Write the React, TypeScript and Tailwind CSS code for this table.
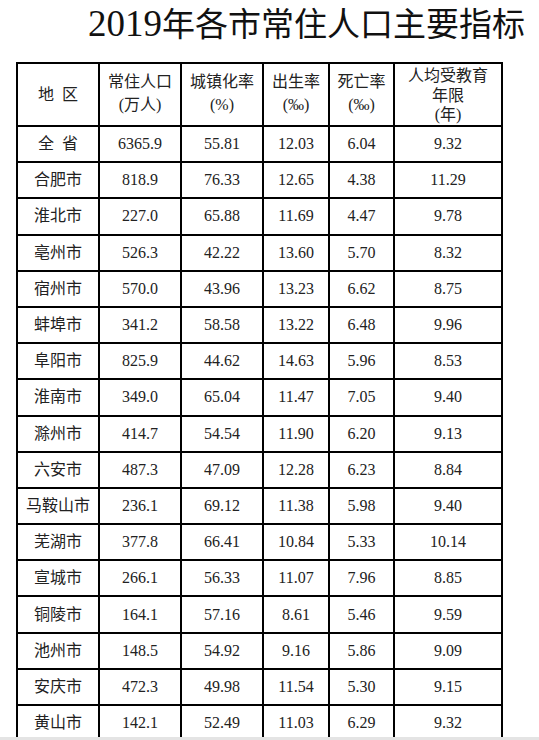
import React from "react";

const rows: [string, string, string, string, string, string][] = [
  ["全省", "6365.9", "55.81", "12.03", "6.04", "9.32"],
  ["合肥市", "818.9", "76.33", "12.65", "4.38", "11.29"],
  ["淮北市", "227.0", "65.88", "11.69", "4.47", "9.78"],
  ["亳州市", "526.3", "42.22", "13.60", "5.70", "8.32"],
  ["宿州市", "570.0", "43.96", "13.23", "6.62", "8.75"],
  ["蚌埠市", "341.2", "58.58", "13.22", "6.48", "9.96"],
  ["阜阳市", "825.9", "44.62", "14.63", "5.96", "8.53"],
  ["淮南市", "349.0", "65.04", "11.47", "7.05", "9.40"],
  ["滁州市", "414.7", "54.54", "11.90", "6.20", "9.13"],
  ["六安市", "487.3", "47.09", "12.28", "6.23", "8.84"],
  ["马鞍山市", "236.1", "69.12", "11.38", "5.98", "9.40"],
  ["芜湖市", "377.8", "66.41", "10.84", "5.33", "10.14"],
  ["宣城市", "266.1", "56.33", "11.07", "7.96", "8.85"],
  ["铜陵市", "164.1", "57.16", "8.61", "5.46", "9.59"],
  ["池州市", "148.5", "54.92", "9.16", "5.86", "9.09"],
  ["安庆市", "472.3", "49.98", "11.54", "5.30", "9.15"],
  ["黄山市", "142.1", "52.49", "11.03", "6.29", "9.32"],
];

const cell = "bg-white flex items-center justify-center";

export default function App() {
  return (
    <div className="h-[740px] w-[539px] overflow-hidden bg-white text-[#222] [font-family:'Liberation_Serif','Noto_Sans_CJK_SC',serif]">
      <div className="h-[737px] overflow-hidden">
        <h1 className="h-[62px] pl-[88px] pt-[2px] leading-[40px] whitespace-nowrap text-[#111]">
          <span className="text-[37px]">2019</span>
          <span className="text-[33px] [font-family:'Noto_Sans_CJK_SC',sans-serif]">年各市常住人口主要指标</span>
        </h1>

        <div className="ml-[16px] w-[487px] grid grid-cols-[80px_80px_80px_64px_63px_106px] grid-rows-[61px] auto-rows-[34.2px] gap-[2px] bg-black p-[2px] text-[16px]">
          {/* header */}
          <div className={cell}>
            <span className="mr-[8px]">地</span>区
          </div>
          <div className={`${cell} flex-col leading-[23px] pb-[4px]`}>
            <span>常住人口</span>
            <span>(万人)</span>
          </div>
          <div className={`${cell} flex-col leading-[23px] pb-[4px]`}>
            <span>城镇化率</span>
            <span>(%)</span>
          </div>
          <div className={`${cell} flex-col leading-[23px] pb-[4px]`}>
            <span>出生率</span>
            <span>(‰)</span>
          </div>
          <div className={`${cell} flex-col leading-[23px] pb-[4px]`}>
            <span>死亡率</span>
            <span>(‰)</span>
          </div>
          <div className={`${cell} flex-col leading-[19.5px] pt-[2px]`}>
            <span>人均受教育</span>
            <span>年限</span>
            <span>(年)</span>
          </div>

          {rows.map((r) => (
            <React.Fragment key={r[0]}>
              <div className={cell}>
                {r[0] === "全省" ? (
                  <>
                    <span className="mr-[8px]">全</span>省
                  </>
                ) : (
                  r[0]
                )}
              </div>
              {r.slice(1).map((v, i) => (
                <div key={i} className={cell}>
                  {v}
                </div>
              ))}
            </React.Fragment>
          ))}
        </div>
      </div>
      <div className="h-[3px] bg-[#e4e4e4]" />
    </div>
  );
}
